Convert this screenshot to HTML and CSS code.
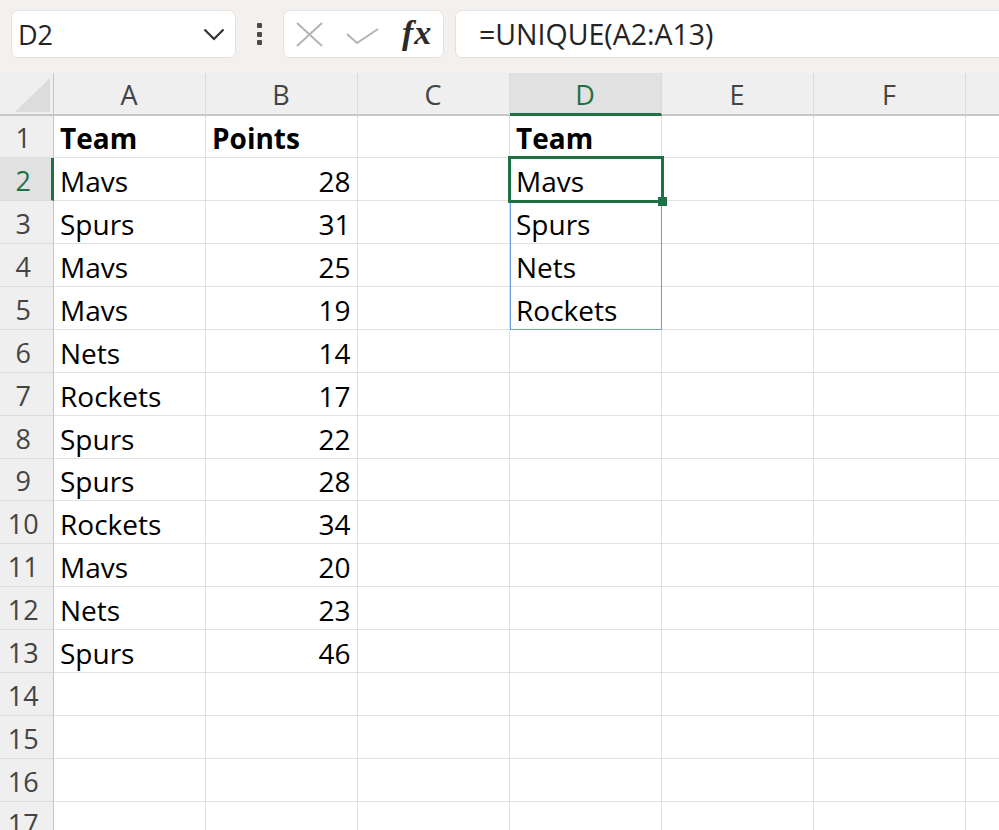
FILE: index.html
```html
<!DOCTYPE html>
<html lang="en">
<head>
<meta charset="utf-8">
<title>UNIQUE</title>
<link rel="stylesheet" href="styles.css">
</head>
<body>
<div class="toolbar">
  <div class="namebox">
    <span>D2</span>
    <svg class="chev" viewBox="0 0 22 13"><polyline points="1.5,1.5 11,11 20.5,1.5" fill="none" stroke="#333" stroke-width="2.2"/></svg>
  </div>
  <div class="dots"><span class="dot"></span><span class="dot"></span><span class="dot"></span></div>
  <div class="fxbox">
    <svg class="xicon" viewBox="0 0 27 25"><path d="M1 1 L26 24 M26 1 L1 24" stroke="#b4b4b4" stroke-width="2" fill="none"/></svg>
    <svg class="check" viewBox="0 0 33 16"><polyline points="1,6 11,15 32,1" stroke="#b4b4b4" stroke-width="2" fill="none"/></svg>
    <span class="fx">fx</span>
  </div>
  <div class="formula">=UNIQUE(A2:A13)</div>
</div>
<div class="viewport">
<div class="sheet">
  <div class="corner"><svg viewBox="0 0 52 40" width="52" height="40"><polygon points="15,39 50,39 50,5" fill="#dcdcdc"/></svg></div>
  <div class="ch">A</div><div class="ch">B</div><div class="ch">C</div><div class="ch selh">D</div><div class="ch">E</div><div class="ch">F</div><div class="ch"></div>

  <div class="rh">1</div><div class="c b">Team</div><div class="c b">Points</div><div class="c"></div><div class="c b">Team</div><div class="c"></div><div class="c"></div><div class="c"></div>
  <div class="rh selr">2</div><div class="c">Mavs</div><div class="c n">28</div><div class="c"></div><div class="c sel">Mavs<span class="spill"></span><span class="focus"><span class="handle"></span></span></div><div class="c"></div><div class="c"></div><div class="c"></div>
  <div class="rh">3</div><div class="c">Spurs</div><div class="c n">31</div><div class="c"></div><div class="c">Spurs</div><div class="c"></div><div class="c"></div><div class="c"></div>
  <div class="rh">4</div><div class="c">Mavs</div><div class="c n">25</div><div class="c"></div><div class="c">Nets</div><div class="c"></div><div class="c"></div><div class="c"></div>
  <div class="rh">5</div><div class="c">Mavs</div><div class="c n">19</div><div class="c"></div><div class="c">Rockets</div><div class="c"></div><div class="c"></div><div class="c"></div>
  <div class="rh">6</div><div class="c">Nets</div><div class="c n">14</div><div class="c"></div><div class="c"></div><div class="c"></div><div class="c"></div><div class="c"></div>
  <div class="rh">7</div><div class="c">Rockets</div><div class="c n">17</div><div class="c"></div><div class="c"></div><div class="c"></div><div class="c"></div><div class="c"></div>
  <div class="rh">8</div><div class="c">Spurs</div><div class="c n">22</div><div class="c"></div><div class="c"></div><div class="c"></div><div class="c"></div><div class="c"></div>
  <div class="rh">9</div><div class="c">Spurs</div><div class="c n">28</div><div class="c"></div><div class="c"></div><div class="c"></div><div class="c"></div><div class="c"></div>
  <div class="rh">10</div><div class="c">Rockets</div><div class="c n">34</div><div class="c"></div><div class="c"></div><div class="c"></div><div class="c"></div><div class="c"></div>
  <div class="rh">11</div><div class="c">Mavs</div><div class="c n">20</div><div class="c"></div><div class="c"></div><div class="c"></div><div class="c"></div><div class="c"></div>
  <div class="rh">12</div><div class="c">Nets</div><div class="c n">23</div><div class="c"></div><div class="c"></div><div class="c"></div><div class="c"></div><div class="c"></div>
  <div class="rh">13</div><div class="c">Spurs</div><div class="c n">46</div><div class="c"></div><div class="c"></div><div class="c"></div><div class="c"></div><div class="c"></div>
  <div class="rh">14</div><div class="c"></div><div class="c"></div><div class="c"></div><div class="c"></div><div class="c"></div><div class="c"></div><div class="c"></div>
  <div class="rh">15</div><div class="c"></div><div class="c"></div><div class="c"></div><div class="c"></div><div class="c"></div><div class="c"></div><div class="c"></div>
  <div class="rh">16</div><div class="c"></div><div class="c"></div><div class="c"></div><div class="c"></div><div class="c"></div><div class="c"></div><div class="c"></div>
  <div class="rh">17</div><div class="c"></div><div class="c"></div><div class="c"></div><div class="c"></div><div class="c"></div><div class="c"></div><div class="c"></div>
</div>
</div>
</body>
</html>
```
FILE: styles.css
```css
* { box-sizing: border-box; }
html, body { margin: 0; padding: 0; }
body {
  width: 999px;
  height: 830px;
  overflow: hidden;
  background: #fff;
  font-family: "Open Sans", "Noto Sans", sans-serif;
  color: #000;
}

/* formula bar */
.toolbar {
  height: 73px;
  background: #f4f0ee;
  display: flex;
  align-items: flex-start;
  padding: 10px 0 0 11px;
}
.namebox {
  width: 225px;
  height: 48px;
  background: #fff;
  border: 1px solid #e4e0de;
  border-radius: 7px;
  display: flex;
  align-items: center;
  justify-content: space-between;
  padding: 0 10px 0 6px;
  font-size: 27px;
  color: #242424;
}
.chev { width: 22px; height: 13px; display: block; }
.dots {
  width: 47px;
  height: 48px;
  display: flex;
  flex-direction: column;
  align-items: center;
  justify-content: center;
  gap: 3.5px;
}
.dot { width: 5px; height: 5px; background: #4a4a4a; border-radius: 1px; }
.fxbox {
  width: 161px;
  height: 48px;
  background: #fff;
  border: 1px solid #e4e0de;
  border-radius: 7px;
  display: flex;
  align-items: center;
  padding-left: 12px;
}
.xicon { width: 27px; height: 25px; display: block; }
.check { width: 33px; height: 16px; display: block; margin-left: 23px; margin-top: 4px; }
.fx {
  margin-left: 23px;
  font-family: "Liberation Serif", serif;
  font-style: italic;
  font-weight: 700;
  font-size: 34px;
  color: #2a2a2a;
  letter-spacing: 1px;
  margin-top: -2px;
}
.formula {
  flex: 1;
  margin-left: 11px;
  margin-right: -20px;
  height: 48px;
  background: #fff;
  border: 1px solid #e4e0de;
  border-radius: 7px;
  display: flex;
  align-items: center;
  padding-left: 23px;
  font-size: 28.5px;
  color: #242424;
}

/* grid */
.viewport { height: 757px; overflow: hidden; }
.sheet {
  display: grid;
  grid-template-columns: 53.5px repeat(7, 152px);
  grid-template-rows: 42.5px repeat(17, 42.875px);
  width: max-content;
}
.corner {
  background: #efefef;
  border-right: 1px solid #c6c6c6;
  border-bottom: 2px solid #c6c6c6;
}
.corner svg { display: block; }
.ch {
  background: #efefef;
  border-right: 1px solid #dadada;
  border-bottom: 2px solid #c6c6c6;
  display: flex;
  align-items: center;
  justify-content: center;
  padding-top: 3px;
  font-size: 27px;
  color: #444;
}
.ch.selh {
  background: #e1e1e1;
  border-bottom: 3px solid #1e7145;
  color: #1e7145;
}
.rh {
  background: #efefef;
  border-right: 1px solid #c6c6c6;
  border-bottom: 1px solid #dcdcdc;
  display: flex;
  align-items: center;
  justify-content: center;
  padding: 3px 6px 0 0;
  font-size: 27px;
  color: #444;
}
.rh.selr {
  background: #e1e1e1;
  border-right: 3px solid #1e7145;
  color: #1e7145;
  padding-right: 4px;
}
.c {
  border-right: 1px solid #e1e1e1;
  border-bottom: 1px solid #e1e1e1;
  display: flex;
  align-items: center;
  padding: 4px 6px 0 6.5px;
  font-size: 28px;
  white-space: nowrap;
  background: #fff;
}
.n { justify-content: flex-end; }
.b { font-weight: 700; }
.sel { position: relative; }
.spill {
  position: absolute;
  left: 0;
  top: 0;
  width: calc(100% + 1px);
  height: 171.5px;
  border: 1px solid #6a98e2;
}
.focus {
  position: absolute;
  left: -2px;
  top: -2px;
  right: -3px;
  bottom: -3px;
  border: 3px solid #1e7145;
}
.handle {
  position: absolute;
  right: -6px;
  bottom: -6px;
  width: 9px;
  height: 9px;
  background: #1e7145;
}
```
